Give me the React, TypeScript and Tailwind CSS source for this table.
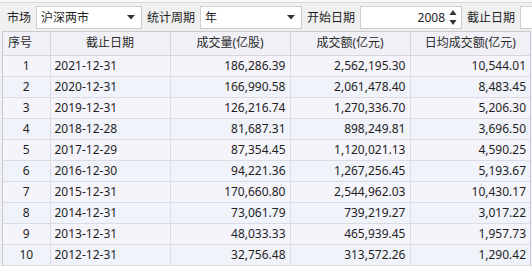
import React from "react";

const rows = [
  ["1", "2021-12-31", "186,286.39", "2,562,195.30", "10,544.01"],
  ["2", "2020-12-31", "166,990.58", "2,061,478.40", "8,483.45"],
  ["3", "2019-12-31", "126,216.74", "1,270,336.70", "5,206.30"],
  ["4", "2018-12-28", "81,687.31", "898,249.81", "3,696.50"],
  ["5", "2017-12-29", "87,354.45", "1,120,021.13", "4,590.25"],
  ["6", "2016-12-30", "94,221.36", "1,267,256.45", "5,193.67"],
  ["7", "2015-12-31", "170,660.80", "2,544,962.03", "10,430.17"],
  ["8", "2014-12-31", "73,061.79", "739,219.27", "3,017.22"],
  ["9", "2013-12-31", "48,033.33", "465,939.45", "1,957.73"],
  ["10", "2012-12-31", "32,756.48", "313,572.26", "1,290.42"],
];

const Caret = () => (
  <svg width="8" height="5" viewBox="0 0 8 5" className="shrink-0">
    <path d="M0 0h8L4 4.5z" fill="#333" />
  </svg>
);

function Select({ value, w }: { value: string; w: string }) {
  return (
    <div className={`${w} shrink-0 h-[23px] bg-white border border-[#cfcfcf] flex items-center pl-1 pr-1.5 justify-between`}>
      <span>{value}</span>
      <Caret />
    </div>
  );
}

export default function App() {
  return (
    <div
      className="w-[532px] h-[266px] overflow-hidden bg-[#f0f0f0] text-[12px] text-[#1f1f1f]"
      style={{ fontFamily: '"Noto Sans", "Noto Sans CJK SC", sans-serif' }}
    >
      <div className="h-[2px] bg-[#f7f7f7]" />
      {/* toolbar */}
      <div className="h-[29px] border-t border-[#d9d9d9] flex items-center pt-[3px] pb-[2px] pl-[7px] gap-[5px] whitespace-nowrap overflow-hidden">
        <span className="leading-none shrink-0">市场</span>
        <Select value="沪深两市" w="w-[106px]" />
        <span className="leading-none shrink-0">统计周期</span>
        <Select value="年" w="w-[102px]" />
        <span className="leading-none shrink-0">开始日期</span>
        <div className="w-[102px] shrink-0 h-[23px] bg-white border border-[#cfcfcf] flex items-center justify-end pr-[4px] gap-[4px]">
          <span>2008</span>
          <svg width="8" height="19" viewBox="0 0 8 19">
            <path d="M0.5 7h7L4 2z" fill="#333" />
            <path d="M0.5 12h7L4 17z" fill="#333" />
          </svg>
        </div>
        <span className="leading-none shrink-0">截止日期</span>
        <div className="w-[40px] shrink-0 h-[23px] bg-white border border-[#cfcfcf]" />
      </div>
      {/* table */}
      <div className="ml-[2px] w-[529px] border border-[#c9c9d1] bg-[#f4f4fa]">
        <table className="w-full border-collapse table-fixed">
          <colgroup>
            <col className="w-[47px]" />
            <col className="w-[120px]" />
            <col className="w-[120px]" />
            <col className="w-[120px]" />
            <col className="w-[120px]" />
          </colgroup>
          <thead>
            <tr className="h-[23px] bg-[#f0f0f6] text-[#2b2b2b]">
              <th className="font-normal text-left pl-[5px] border-r border-b border-[#d6d6de]">序号</th>
              <th className="font-normal text-center border-r border-b border-[#d6d6de]">截止日期</th>
              <th className="font-normal text-center border-r border-b border-[#d6d6de]">成交量(亿股)</th>
              <th className="font-normal text-center border-r border-b border-[#d6d6de]">成交额(亿元)</th>
              <th className="font-normal text-center border-b border-[#d6d6de]">日均成交额(亿元)</th>
            </tr>
          </thead>
          <tbody>
            {rows.map((r, i) => (
              <tr key={r[0]} className={`h-[21px] ${i % 2 === 0 ? "bg-[#f6f4fb]" : "bg-[#f0f3f9]"}`}>
                <td className="text-center border-r border-b border-[#dcdce4]">{r[0]}</td>
                <td className="pl-[4px] border-r border-b border-[#dcdce4]">{r[1]}</td>
                <td className="text-right pr-[4px] border-r border-b border-[#dcdce4]">{r[2]}</td>
                <td className="text-right pr-[4px] border-r border-b border-[#dcdce4]">{r[3]}</td>
                <td className="text-right pr-[4px] border-b border-[#dcdce4]">{r[4]}</td>
              </tr>
            ))}
          </tbody>
        </table>
      </div>
    </div>
  );
}
